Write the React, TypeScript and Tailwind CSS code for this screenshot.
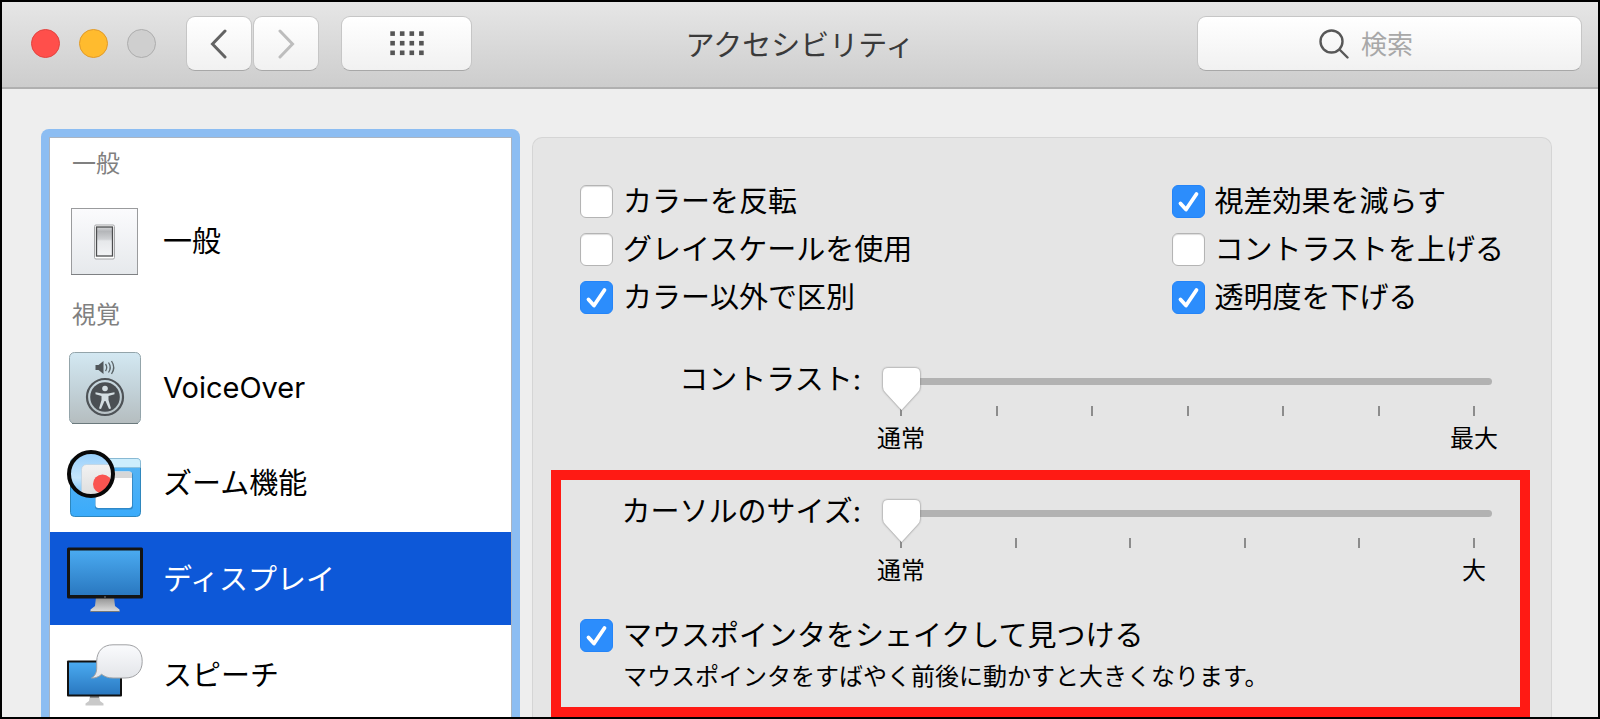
import { useState, type ReactNode } from "react";

function BackIcon() {
  return (
    <svg width="18" height="30" viewBox="0 0 18 30" fill="none" stroke="currentColor" strokeWidth="3" strokeLinecap="round">
      <path d="M15 2 2.500 15 15 28" />
    </svg>
  );
}

function ForwardIcon() {
  return (
    <svg width="18" height="30" viewBox="0 0 18 30" fill="none" stroke="currentColor" strokeWidth="3" strokeLinecap="round">
      <path d="M3 2 15.500 15 3 28" />
    </svg>
  );
}

function GridIcon() {
  return (
    <svg width="34" height="25" viewBox="0 0 34 25" fill="#555">
      {[0.3, 9.9, 19.5].map((y) =>
        [0.3, 9.9, 19.5, 29.1].map((x) => <rect key={`${x}-${y}`} x={x} y={y} width="4.6" height="4.6" />)
      )}
    </svg>
  );
}

function SearchIcon() {
  return (
    <svg width="30" height="30" viewBox="0 0 30 30" fill="none" stroke="#585858" strokeWidth="2.4" strokeLinecap="round">
      <circle cx="12.500" cy="12.500" r="11" />
      <path d="m20.500 20.500 8 8" />
    </svg>
  );
}

function SwitchIcon() {
  return (
    <svg width="68" height="68" viewBox="0 0 68 68">
      <defs>
        <linearGradient id="plate" x1="0" y1="0" x2="0" y2="1">
          <stop offset="0" stopColor="#fbfbfd" />
          <stop offset="1" stopColor="#e6e9ec" />
        </linearGradient>
        <linearGradient id="rocker" x1="0" y1="0" x2="0" y2="1">
          <stop offset="0" stopColor="#d6d7d9" />
          <stop offset="0.15" stopColor="#b4b6b9" />
          <stop offset="0.42" stopColor="#cfd1d4" />
          <stop offset="0.48" stopColor="#e6e8ea" />
          <stop offset="1" stopColor="#f3f4f6" />
        </linearGradient>
      </defs>
      <rect x="0.500" y="0.500" width="66" height="66" fill="url(#plate)" stroke="#9a9b9d" />
      <path d="M0 66.500h67" stroke="#7e8083" />
      <rect x="23.500" y="17" width="20" height="34" rx="1.500" fill="#fff" stroke="#a5a6a8" />
      <rect x="25.500" y="19" width="16" height="29" fill="url(#rocker)" stroke="#4c4d4f" strokeWidth="1.300" />
    </svg>
  );
}

function VoiceOverIcon() {
  return (
    <svg width="72" height="73" viewBox="0 0 72 73">
      <defs>
        <linearGradient id="voice" x1="0" y1="0" x2="0" y2="1">
          <stop offset="0" stopColor="#d3e8f2" />
          <stop offset="0.5" stopColor="#c3d3da" />
          <stop offset="1" stopColor="#b5bdbf" />
        </linearGradient>
      </defs>
      <rect x="0.500" y="0.500" width="71" height="71" rx="5" fill="url(#voice)" stroke="#93a4aa" />
      <path d="M3 71.500h66" stroke="#6b797d" />
      <path d="M26.500 13h3l5-4v13l-5-4h-3z" fill="#50565a" />
      <g fill="none" stroke="#5b6468" strokeWidth="1.300">
        <path d="M36.500 12q2.500 3.500 0 7" />
        <path d="M39.500 10.500q3.500 5 0 10" />
        <path d="M42.500 9q4.500 6.500 0 13" />
      </g>
      <circle cx="36" cy="45" r="18" fill="none" stroke="#4e5357" strokeWidth="2.200" />
      <circle cx="36" cy="45" r="14.800" fill="#4a4f53" />
      <circle cx="36" cy="36.500" r="2.800" fill="#d3dde1" />
      <path d="M26.500 40.200 33 41.500h6l6.500-1.300v2L39.500 44v4l2.500 8.500-2 .6L36.500 49h-1L32 57.100l-2-.6 2.500-8.500v-4l-6-1.800z" fill="#d3dde1" />
    </svg>
  );
}

function ZoomIcon() {
  return (
    <svg width="76" height="70" viewBox="0 0 76 70">
      <defs>
        <linearGradient id="zoomBg" x1="0" y1="0" x2="0" y2="1">
          <stop offset="0" stopColor="#58b4f2" />
          <stop offset="1" stopColor="#3aabfb" />
        </linearGradient>
        <linearGradient id="lens" x1="0" y1="0" x2="0" y2="1">
          <stop offset="0" stopColor="#8fcbfa" />
          <stop offset="0.6" stopColor="#c5e5fd" />
          <stop offset="1" stopColor="#68bdfb" />
        </linearGradient>
        <linearGradient id="lensWin" x1="0" y1="0" x2="0" y2="1">
          <stop offset="0" stopColor="#f2f2f2" />
          <stop offset="1" stopColor="#d8d8d8" />
        </linearGradient>
        <clipPath id="lensClip">
          <circle cx="24" cy="25" r="21" />
        </clipPath>
      </defs>
      <rect x="3.500" y="9.500" width="70" height="58" rx="4" fill="url(#zoomBg)" stroke="#2f87bd" />
      <path d="M7 9.500h63q3.500 0 3.500 3.500v5.500h-70V13q0-3.500 3.500-3.500z" fill="#cdeefd" stroke="#8fb9cc" strokeWidth="0.600" />
      <rect x="28" y="23" width="38" height="37.500" rx="3" fill="#1c5d8c" opacity="0.450" />
      <rect x="28.500" y="22.500" width="36.500" height="36.500" rx="3" fill="#fff" />
      <path d="M31 22.500h31q3 0 3 3V29H28.500z" fill="#d7d7d7" />
      <g clipPath="url(#lensClip)">
        <rect width="48" height="48" fill="url(#lens)" />
        <rect x="14.500" y="15.500" width="40" height="40" rx="5" fill="url(#lensWin)" stroke="#b9cddc" strokeWidth="0.600" />
        <circle cx="35.500" cy="35" r="9.500" fill="#fa5450" />
      </g>
      <circle cx="24" cy="25" r="22" fill="none" stroke="#080808" strokeWidth="4" />
    </svg>
  );
}

function DisplayIcon() {
  return (
    <svg width="78" height="66" viewBox="0 0 78 66">
      <defs>
        <linearGradient id="screen" x1="0" y1="0" x2="0" y2="1">
          <stop offset="0" stopColor="#4aaaf0" />
          <stop offset="1" stopColor="#2a78c0" />
        </linearGradient>
        <linearGradient id="stand" x1="0" y1="0" x2="0" y2="1">
          <stop offset="0" stopColor="#8f8f8f" />
          <stop offset="1" stopColor="#dcdcdc" />
        </linearGradient>
      </defs>
      <path d="M30 50h18l1 9 4.500 3.500v2h-29v-2L29 59z" fill="url(#stand)" />
      <path d="M24.500 64.500h29" stroke="#777" />
      <rect x="1" y="0.500" width="76" height="51" rx="1.500" fill="#141414" />
      <rect x="4" y="3.500" width="70" height="44.500" fill="url(#screen)" />
      <circle cx="39" cy="50" r="0.800" fill="#888" />
    </svg>
  );
}

function SpeechIcon() {
  return (
    <svg width="78" height="64" viewBox="0 0 78 64">
      <defs>
        <linearGradient id="bubble" x1="0" y1="0" x2="0" y2="1">
          <stop offset="0" stopColor="#fafbfd" />
          <stop offset="1" stopColor="#e3e5e9" />
        </linearGradient>
      </defs>
      <path d="M24 51h9l1 6 3.500 2.500v2h-18v-2L23 57z" fill="#c9c9c9" />
      <path d="M24 51h9v3h-9z" fill="#8d8d8d" />
      <rect x="1" y="16.500" width="55" height="36" rx="1" fill="#111" />
      <rect x="3" y="18.500" width="51" height="32" fill="url(#screen)" />
      <path
        d="M47 .8h13c11 0 16.200 6.700 16.200 16.700S70 34 59 34H47c-5 0-8-1.300-11.500-3.700C33 33 29 34.300 25.500 34c3.500-2 5.200-5.500 5.200-9.500V17C31 7 37 .8 47 .8z"
        fill="url(#bubble)"
        stroke="#a0a1a4"
      />
    </svg>
  );
}

type ItemProps = {
  icon: ReactNode;
  text: string;
  selected?: boolean;
};

function SidebarItem({ icon, text, selected }: ItemProps) {
  return (
    <button
      aria-pressed={!!selected}
      className={`mb-[3px] flex h-[93px] w-full shrink-0 items-center gap-[19px] pt-[3px] pl-4 text-left text-[29px] ${
        selected ? "bg-[#0d58d8] text-white" : "text-black"
      }`}
    >
      <span className="flex w-[78px] justify-center">{icon}</span>
      <span>{text}</span>
    </button>
  );
}

function Checkbox({ text, initial = false }: { text: string; initial?: boolean }) {
  const [checked, setChecked] = useState(initial);
  return (
    <label className="flex items-center gap-[10px] leading-[33px] whitespace-nowrap">
      <span className="grid">
        <input
          type="checkbox"
          checked={checked}
          onChange={(e) => setChecked(e.target.checked)}
          className="col-start-1 row-start-1 size-[33px] appearance-none rounded-md border border-[#b4b4b4] bg-white shadow-[inset_0_1px_1px_#dcdcdc] checked:border-[#2484f8] checked:bg-[#2c8dfc] checked:shadow-none"
        />
        {checked && (
          <svg
            className="pointer-events-none col-start-1 row-start-1"
            width="33"
            height="33"
            viewBox="0 0 33 33"
            fill="none"
            stroke="#fff"
            strokeWidth="3.800"
            strokeLinecap="round"
            strokeLinejoin="round"
          >
            <path d="m8.500 18.500 5.500 6L24.500 9" />
          </svg>
        )}
      </span>
      <span>{text}</span>
    </label>
  );
}

type SliderProps = {
  id: string;
  label: string;
  steps: number;
  min: string;
  max: string;
};

function SliderRow({ id, label, steps, min, max }: SliderProps) {
  return (
    <div className="flex gap-[22px]">
      <label htmlFor={id} className="w-[281px] shrink-0 text-right leading-6">
        {label}
      </label>
      <div className="flex-1 pt-[10px]">
        <input
          id={id}
          type="range"
          min={0}
          max={steps - 1}
          defaultValue={0}
          className="relative z-10 block h-[7px] w-full appearance-none rounded-full bg-[#b2b2b2] [&::-webkit-slider-runnable-track]:h-[7px] [&::-webkit-slider-runnable-track]:drop-shadow-[0_0_1px_#777] [&::-webkit-slider-thumb]:-mt-[10px] [&::-webkit-slider-thumb]:h-[42px] [&::-webkit-slider-thumb]:w-[37px] [&::-webkit-slider-thumb]:appearance-none [&::-webkit-slider-thumb]:bg-white [&::-webkit-slider-thumb]:[clip-path:path('M5_0H32Q37_0_37_5V19Q37_22_35_24L18.5_42L2_24Q0_22_0_19V5Q0_0_5_0Z')]"
        />
        <div className="mt-[21px] flex justify-between px-[17px]">
          {Array.from({ length: steps }, (_, i) => (
            <span key={i} className="h-[10px] w-[2px] bg-[#8c8c8c]" />
          ))}
        </div>
        <div className="-mx-[6px] mt-[11px] flex justify-between text-[24px] leading-6">
          <span className="w-12 text-center">{min}</span>
          <span className="w-12 text-center">{max}</span>
        </div>
      </div>
    </div>
  );
}

const toolButton =
  "flex h-[55px] items-center justify-center rounded-[9px] border border-[#c6c6c6] border-b-[#a8a8a8] bg-linear-to-b from-white to-[#f1f1f1]";

export default function App() {
  return (
    <div className="flex h-screen flex-col overflow-hidden border-2 border-black bg-[#eeeeee] font-['Inter','Noto_Sans_CJK_JP',sans-serif] text-black">
      {/* ツールバー */}
      <header className="grid h-[87px] shrink-0 grid-cols-[1fr_auto_1fr] items-center border-b-2 border-[#b0b0b0] bg-linear-to-b from-[#e6e6e6] to-[#cdcdcd] pb-[2px]">
        <div className="flex items-center pl-[29px]">
          <div className="flex gap-[19px]">
            <button aria-label="閉じる" className="size-[29px] rounded-full border border-[#e2433f] bg-[#ff4f4b]" />
            <button aria-label="しまう" className="size-[29px] rounded-full border border-[#e09a2a] bg-[#ffbb2e]" />
            <button aria-label="拡大" className="size-[29px] rounded-full border border-[#adadad] bg-[#cfcfcf]" />
          </div>
          <div className="ml-[30px] flex gap-px">
            <button aria-label="戻る" className={`${toolButton} w-[66px] text-[#636363]`}>
              <BackIcon />
            </button>
            <button aria-label="進む" className={`${toolButton} w-[66px] text-[#bdbdbd]`}>
              <ForwardIcon />
            </button>
          </div>
          <button aria-label="すべてを表示" className={`${toolButton} ml-[22px] w-[131px]`}>
            <GridIcon />
          </button>
        </div>
        <h1 className="pt-1 text-[29px] text-[#3a3a3a]">アクセシビリティ</h1>
        <label className={`${toolButton} mr-4 w-[385px] gap-3 justify-self-end pl-[121px]`}>
          <SearchIcon />
          <input
            type="text"
            aria-label="検索"
            placeholder="検索"
            className="min-w-0 flex-1 bg-transparent pt-[2px] text-[26px] outline-none placeholder:text-[#a8a8a8]"
          />
        </label>
      </header>

      <main className="flex min-h-0 flex-1 pt-10 pr-[46px] pl-[39px]">
        {/* サイドバー */}
        <div className="flex w-[479px] shrink-0 flex-col overflow-hidden rounded-t-lg bg-[#8cbdf2] px-2 pt-2">
          <nav className="flex min-h-0 flex-1 flex-col border border-b-0 border-[#a9b4c2] bg-white">
            <h2 className="mb-[6px] flex h-[50px] shrink-0 items-center pt-[2px] pl-[22px] text-[24px] text-[#808080]">一般</h2>
            <SidebarItem icon={<SwitchIcon />} text="一般" />
            <h2 className="flex h-[50px] shrink-0 items-center pl-[22px] text-[24px] text-[#808080]">視覚</h2>
            <SidebarItem icon={<VoiceOverIcon />} text="VoiceOver" />
            <SidebarItem icon={<ZoomIcon />} text="ズーム機能" />
            <SidebarItem icon={<DisplayIcon />} text="ディスプレイ" selected />
            <SidebarItem icon={<SpeechIcon />} text="スピーチ" />
          </nav>
        </div>

        {/* 設定パネル */}
        <section className="mt-2 ml-3 min-w-0 flex-1 rounded-t-[10px] border border-b-0 border-[#d5d5d5] bg-[#e5e5e5] pt-[47px] text-[29px]">
          <div className="flex justify-between px-[47px]">
            <div className="flex flex-col gap-[15px]">
              <Checkbox text="カラーを反転" />
              <Checkbox text="グレイスケールを使用" />
              <Checkbox text="カラー以外で区別" initial />
            </div>
            <div className="flex flex-col gap-[15px]">
              <Checkbox text="視差効果を減らす" initial />
              <Checkbox text="コントラストを上げる" />
              <Checkbox text="透明度を下げる" initial />
            </div>
          </div>
          <div className="mt-[54px] pr-[59px] pl-[47px]">
            <SliderRow id="contrast" label="コントラスト:" steps={7} min="通常" max="最大" />
          </div>

          <div className="mt-[19px] mr-[21px] ml-[18px] border-10 border-[#ff1a14] pt-5 pr-[28px] pb-[18px] pl-[19px]">
            <SliderRow id="cursor" label="カーソルのサイズ:" steps={6} min="通常" max="大" />
            <div className="mt-9">
              <Checkbox text="マウスポインタをシェイクして見つける" initial />
            </div>
            <p className="mt-[13px] pl-[43px] text-[24px] leading-6">マウスポインタをすばやく前後に動かすと大きくなります。</p>
          </div>
        </section>
      </main>
    </div>
  );
}
